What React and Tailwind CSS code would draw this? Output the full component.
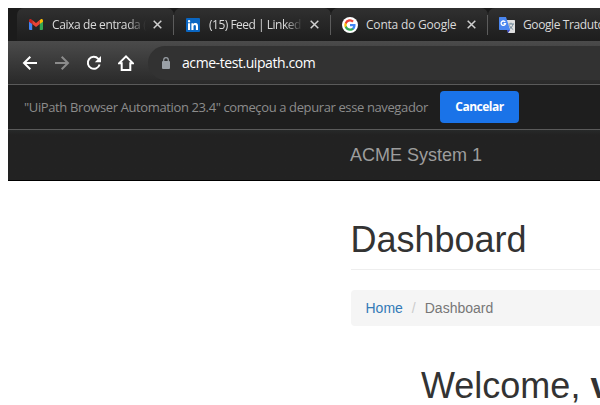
import React from 'react';

const UI = "font-['Open_Sans','Noto_Sans',sans-serif]";

function GmailIcon() {
  return (
    <svg className="h-[11px] w-[14px] shrink-0" viewBox="0 0 14 11">
      <path fill="#4285f4" d="M0 2v8a1 1 0 0 0 1 1h2.200V4.500L0 2z" />
      <path fill="#34a853" d="M10.800 11H13a1 1 0 0 0 1-1V2l-3.200 2.500V11z" />
      <path fill="#fbbc04" d="M10.800 1.200v3.900L14 2.700V1.500C14 .1 12.500-.5 11.500.5l-.7.700z" />
      <path fill="#ea4335" d="M3.200 5.100V1.100L7 4l3.800-2.900v4L7 8 3.200 5.100z" />
      <path fill="#c5221f" d="M0 1.500v1.200l3.200 2.400v-4L2.500.5C1.500-.4 0 .200 0 1.500z" />
    </svg>
  );
}

function LinkedInIcon() {
  return (
    <svg className="h-[14px] w-[14px] shrink-0" viewBox="0 0 14 14">
      <rect width="14" height="14" rx="1" fill="#0a66c2" />
      <path fill="#fff" d="M2 5.300h2.100V12H2zM3.050 2a1.200 1.200 0 1 1 0 2.400 1.200 1.200 0 0 1 0-2.400zM5.400 5.300h2v.9c.3-.5 1-1.100 2.100-1.100 2.100 0 2.500 1.400 2.500 3.200V12H9.900V8.700c0-.8 0-1.800-1.100-1.800S7.500 7.800 7.500 8.700V12H5.400z" />
    </svg>
  );
}

function GoogleIcon() {
  return (
    <svg className="h-4 w-4 shrink-0" viewBox="0 0 16 16">
      <circle cx="8" cy="8" r="8" fill="#fff" />
      <g transform="translate(2.200 2.200) scale(.483)">
        <path fill="#4285f4" d="M23.500 12.300c0-.8-.1-1.600-.2-2.300H12v4.500h6.500a5.500 5.500 0 0 1-2.400 3.600v3h3.900c2.200-2.100 3.500-5.100 3.500-8.800z" />
        <path fill="#34a853" d="M12 24c3.200 0 6-1.100 8-2.900l-3.900-3c-1.100.7-2.500 1.100-4.100 1.100-3.100 0-5.800-2.100-6.700-4.900h-4v3.100A12 12 0 0 0 12 24z" />
        <path fill="#fbbc05" d="M5.300 14.300a7.200 7.200 0 0 1 0-4.600V6.600h-4a12 12 0 0 0 0 10.800z" />
        <path fill="#ea4335" d="M12 4.800c1.800 0 3.300.6 4.600 1.800L20 3.200A12 12 0 0 0 1.300 6.600l4 3.100c.9-2.800 3.600-4.900 6.700-4.900z" />
      </g>
    </svg>
  );
}

function TranslateIcon() {
  return (
    <svg className="h-4 w-4 shrink-0" viewBox="0 0 16 16">
      <path fill="#e0e0e0" d="M7 3h8.300a.7.700 0 0 1 .7.700v11.600a.7.700 0 0 1-.7.700H9z" />
      <path fill="none" stroke="#6f8797" strokeWidth="1" d="M9.500 7h5.500M12 5.700V7M14 7c-.5 2.300-2 4-3.500 5M10.500 8.500c1 2 2.300 3.200 3.700 4" />
      <path fill="#3a4bc8" d="M8 13h3.200L9 16z" />
      <path fill="#4a86f0" d="M.7 0H7l4.200 13H.7a.7.700 0 0 1-.7-.7V.7A.7.700 0 0 1 .7 0z" />
      <path fill="none" stroke="#fff" strokeWidth="1.300" d="M6.200 5A2.200 2.200 0 1 0 6.500 6.700H4.600" />
    </svg>
  );
}

function Close() {
  return (
    <svg className="h-[9px] w-[9px] shrink-0" viewBox="0 0 9 9">
      <path d="M.7.700l7.600 7.600M8.300.7L.7 8.300" stroke="#d0d0d0" strokeWidth="1.500" fill="none" />
    </svg>
  );
}

function Tab({ icon, title, tracking, fade, last }) {
  return (
    <div className="flex w-[157px] shrink-0 flex-col bg-[#1b1b1b]">
      <div className="flex h-[33px] items-center rounded-t-[7px] bg-linear-to-b from-[#303030] to-[#1d1d1d]">
        <div className="flex w-[35px] shrink-0 items-center justify-center pl-[3px]">{icon}</div>
        <div
          className={`${UI} ${tracking} ${last ? 'w-[120px]' : 'w-[94px]'} ${fade ? 'mask-r-from-80% mask-r-to-100%' : ''} shrink-0 overflow-hidden text-[12px] leading-4 whitespace-nowrap text-[#dadada]`}
        >
          {title}
        </div>
        {!last && (
          <>
            <div className="w-[7px] shrink-0" />
            <Close />
            <div className="ml-auto h-5 w-px bg-[#5c5c5c]" />
          </>
        )}
      </div>
    </div>
  );
}

export default function App() {
  return (
    <div className="h-[405px] w-[600px] overflow-hidden bg-white pt-2 pl-2">
      <div className="flex h-[33px] overflow-hidden bg-[#1b1b1b] pl-[9px]">
        <Tab icon={<GmailIcon />} title="Caixa de entrada (" tracking="tracking-[-0.38px]" fade />
        <Tab icon={<LinkedInIcon />} title="(15) Feed | Linked" tracking="tracking-[-0.5px]" fade />
        <Tab icon={<GoogleIcon />} title="Conta do Google" tracking="tracking-[-0.2px]" />
        <Tab icon={<TranslateIcon />} title="Google Tradutor" tracking="tracking-[-0.4px]" last />
      </div>

      <div className="flex h-[43px] items-center bg-linear-to-b from-[#4b4b4b] to-[#292929] pl-[14px]">
        <svg className="h-4 w-4" viewBox="0 0 16 16" fill="none" stroke="#fff" strokeWidth="2">
          <path d="M15 8H2.500M8.300 1.700L2 8l6.300 6.300" />
        </svg>
        <svg className="ml-4 h-4 w-4" viewBox="0 0 16 16" fill="none" stroke="#8b8b8b" strokeWidth="2">
          <path d="M1 8h12.500M7.700 1.700L14 8l-6.300 6.300" />
        </svg>
        <svg className="ml-4 h-4 w-4" viewBox="0 0 16 16">
          <path d="M13.600 9.500A6 6 0 1 1 12.300 3.800L13.500 5" fill="none" stroke="#fff" strokeWidth="2" />
          <path d="M15 1v6.200H8.800z" fill="#fff" />
        </svg>
        <svg className="ml-4 h-[18px] w-4" viewBox="0 0 16 18" fill="none" stroke="#fff" strokeWidth="2">
          <path d="M1 9.300h2.700V16h8.600V9.300H15L8 2.300z" />
        </svg>
        <div className="ml-[14px] flex h-[34px] flex-1 items-center rounded-l-full bg-[#323232] pl-[14px]">
          <svg className="h-3 w-2" viewBox="0 0 8 12">
            <rect y="4" width="8" height="8" rx="1" fill="#9aa0a6" />
            <path d="M1.700 4.500V3a2.300 2.300 0 0 1 4.600 0v1.500" fill="none" stroke="#9aa0a6" strokeWidth="1.200" />
          </svg>
          <div className={`${UI} ml-3 text-[14px] leading-5 tracking-[-0.43px] text-white`}>acme-test.uipath.com</div>
        </div>
      </div>

      <div className="flex h-[46px] items-center border-y border-[#5a5a5a] bg-[#1e1e1e] pl-4">
        <div className={`${UI} w-[416px] shrink-0 text-[13px] leading-5 tracking-[-0.38px] whitespace-nowrap text-[#8c8c8c]`}>
          "UiPath Browser Automation 23.4" começou a depurar esse navegador
        </div>
        <button className={`${UI} h-8 w-[79px] rounded-[4px] bg-[#1a73e8] text-[12px] font-bold tracking-[-0.5px] text-white`}>
          Cancelar
        </button>
      </div>

      <div className="flex h-[51px] items-center border-b border-black bg-linear-to-b from-[#272929] from-0% via-[#222] via-10% to-[#222] pl-[342px] font-['Liberation_Sans',Arial,sans-serif] text-[18px] text-[#9d9d9d]">
        ACME System 1
      </div>

      <div className="pl-[343px] font-['Liberation_Sans',Arial,sans-serif] text-[#333]">
        <h1 className="mt-[39px] h-[50px] border-b border-[#eee] indent-[-0.5px] text-[36px] leading-[40px]">Dashboard</h1>
        <div className="mt-5 flex h-9 items-center rounded-l-[4px] bg-[#f5f5f5] pl-[14.5px] text-[14px] leading-5">
          <span className="text-[#337ab7]">Home</span>
          <span className="px-[9px] text-[#ccc]">/</span>
          <span className="text-[#777]">Dashboard</span>
        </div>
        <h2 className="mt-10 pl-[70px] text-[36px] leading-[40px] whitespace-nowrap">
          Welcome, <b>v</b>
        </h2>
      </div>
    </div>
  );
}
